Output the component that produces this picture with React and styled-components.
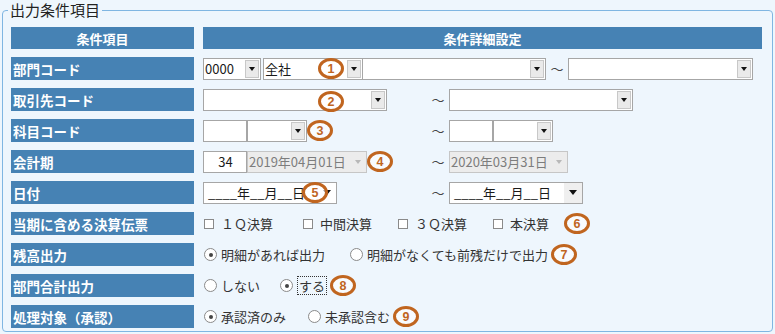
import React from 'react';
import styled, { createGlobalStyle, css } from 'styled-components';

const GlobalStyle = createGlobalStyle`
  html, body { margin: 0; padding: 0; background: #eef6fd; }
  body { font-family: "Noto Sans CJK JP", "Noto Sans", sans-serif; color: #333; }
`;

const Page = styled.div`
  width: 775px;
  height: 334px;
  box-sizing: border-box;
  padding: 0 2px 0 2px;
  overflow: hidden;
`;

const Fieldset = styled.fieldset`
  margin: 0;
  padding: 7px 10px 3px 8px;
  border: 1px solid #80b6e2;
  border-radius: 4px;
  min-width: 0;
`;

const Legend = styled.legend`
  padding: 0 2px;
  margin-left: -3px;
  font-size: 15px;
  line-height: 20px;
  color: #222;
`;

const Grid = styled.div`
  display: grid;
  grid-template-columns: 183px 559px;
  grid-template-rows: 22px repeat(9, 23px);
  column-gap: 9px;
  row-gap: 8px;
`;

const HeadCell = styled.div`
  background: #4682b4;
  color: #fff;
  font-weight: 700;
  font-size: 13px;
  display: flex;
  align-items: center;
  justify-content: center;
`;

const Label = styled.div`
  background: #4682b4;
  color: #fff;
  font-weight: 700;
  font-size: 13.5px;
  display: flex;
  align-items: center;
  padding-left: 2px;
  white-space: nowrap;
`;

const Detail = styled.div`
  position: relative;
  display: flex;
  align-items: center;
  font-size: 13px;
  color: #333;
`;

const Group = styled.div`
  display: flex;
  align-items: center;
  width: ${p => p.$w}px;
  flex: none;
`;

const Box = styled.div`
  box-sizing: border-box;
  flex: none;
  height: 22px;
  width: ${p => p.$w}px;
  margin-left: ${p => p.$ml || 0}px;
  border: 1px solid ${p => (p.$disabled ? '#c6c6c6' : '#a6a6a6')};
  background: ${p => (p.$disabled ? '#ececec' : '#fff')};
  color: ${p => (p.$disabled ? '#7d7d7d' : '#1a1a1a')};
  display: flex;
  align-items: center;
  font-size: 13px;
`;

const BoxText = styled.span`
  flex: 1;
  padding-left: 1px;
  white-space: nowrap;
  overflow: hidden;
  text-align: ${p => (p.$center ? 'center' : 'left')};
`;

const DropBtn = styled.span`
  box-sizing: border-box;
  flex: none;
  width: 14px;
  height: 18px;
  margin-right: 1px;
  border: 1px solid #c8c8c8;
  background: #eaeaea;
  display: flex;
  align-items: center;
  justify-content: center;
`;

const PlainArrow = styled.span`
  flex: none;
  width: ${p => p.$w || 16}px;
  align-self: stretch;
  background: ${p => (p.$shade ? '#efefef' : 'transparent')};
  display: flex;
  align-items: center;
  justify-content: center;
`;

const Arrow = styled.span`
  width: 0;
  height: 0;
  border-left: ${p => (p.$big ? 4 : 3.5)}px solid transparent;
  border-right: ${p => (p.$big ? 4 : 3.5)}px solid transparent;
  border-top: ${p => (p.$big ? 5 : 4)}px solid ${p => (p.$light ? '#b8b8b8' : '#111')};
`;

const Tilde = styled.span`
  flex: none;
  width: 22px;
  text-align: center;
  font-size: 13px;
  color: #444;
`;

const Badge = styled.span`
  box-sizing: border-box;
  flex: none;
  width: 26px;
  height: 21px;
  border: 3px solid #c0651f;
  border-radius: 50%;
  background: rgba(255, 255, 255, 0.6);
  color: #c0651f;
  font: bold 12.5px "Liberation Sans", Arial, sans-serif;
  display: inline-flex;
  align-items: center;
  justify-content: center;
  margin-left: ${p => p.$ml || 0}px;
  ${p =>
    p.$over &&
    css`
      position: absolute;
      left: ${p.$left}px;
      top: ${p.$top}px;
      margin: 0;
    `}
`;

const Option = styled.label`
  display: inline-flex;
  align-items: center;
  flex: none;
  margin-left: ${p => p.$ml || 0}px;
  white-space: nowrap;
  color: #333;
  font-size: 13px;
`;

const CheckBox = styled.span`
  box-sizing: border-box;
  width: 10px;
  height: 10px;
  border: 1px solid #8a8a8a;
  background: #fff;
  margin: 0 7px 0 1px;
`;

const Radio = styled.span`
  box-sizing: border-box;
  width: 13px;
  height: 13px;
  border: 1px solid #8a8a8a;
  border-radius: 50%;
  background: #fff;
  margin: 0 4px 0 1px;
  display: flex;
  align-items: center;
  justify-content: center;
  &::after {
    content: '';
    width: 4px;
    height: 4px;
    border-radius: 50%;
    background: ${p => (p.$checked ? '#444' : 'transparent')};
  }
`;

const Focus = styled.span`
  border: 1px dotted #333;
  padding: 0 1px;
  line-height: 17px;
`;

function Select({ w, ml, text, disabled }) {
  return (
    <Box $w={w} $ml={ml} $disabled={disabled}>
      <BoxText>{text}</BoxText>
      {disabled ? (
        <PlainArrow $w={17}>
          <Arrow $light />
        </PlainArrow>
      ) : (
        <DropBtn>
          <Arrow />
        </DropBtn>
      )}
    </Box>
  );
}

function Input({ w, ml, text }) {
  return (
    <Box $w={w} $ml={ml}>
      <BoxText $center>{text}</BoxText>
    </Box>
  );
}

function DateField({ w, shade }) {
  return (
    <Box $w={w}>
      <BoxText>&nbsp;____年__月__日</BoxText>
      <PlainArrow $w={18} $shade={shade}>
        <Arrow $big />
      </PlainArrow>
    </Box>
  );
}

export default function App() {
  return (
    <>
      <GlobalStyle />
      <Page>
        <Fieldset>
          <Legend>出力条件項目</Legend>
          <Grid>
            <HeadCell>条件項目</HeadCell>
            <HeadCell>条件詳細設定</HeadCell>

            <Label>部門コード</Label>
            <Detail>
              <Select w={58} text="0000" />
              <Select w={100} ml={2} text="全社" />
              <Select w={184} ml={-1} />
              <Tilde>〜</Tilde>
              <Select w={185} />
              <Badge $over $left={115} $top={1}>1</Badge>
            </Detail>

            <Label>取引先コード</Label>
            <Detail>
              <Group $w={224}>
                <Select w={184} />
              </Group>
              <Tilde>〜</Tilde>
              <Select w={184} />
              <Badge $over $left={115} $top={3}>2</Badge>
            </Detail>

            <Label>科目コード</Label>
            <Detail>
              <Group $w={224}>
                <Input w={44} />
                <Select w={60} />
                <Badge>3</Badge>
              </Group>
              <Tilde>〜</Tilde>
              <Input w={44} />
              <Select w={60} />
            </Detail>

            <Label>会計期</Label>
            <Detail>
              <Group $w={224}>
                <Input w={44} text="34" />
                <Select w={120} disabled text="2019年04月01日" />
                <Badge>4</Badge>
              </Group>
              <Tilde>〜</Tilde>
              <Select w={119} disabled text="2020年03月31日" />
            </Detail>

            <Label>日付</Label>
            <Detail>
              <Group $w={224}>
                <DateField w={134} />
              </Group>
              <Tilde>〜</Tilde>
              <DateField w={134} shade />
              <Badge $over $left={99} $top={1}>5</Badge>
            </Detail>

            <Label>当期に含める決算伝票</Label>
            <Detail>
              <Option><CheckBox />１Ｑ決算</Option>
              <Option $ml={29}><CheckBox />中間決算</Option>
              <Option $ml={25}><CheckBox />３Ｑ決算</Option>
              <Option $ml={25}><CheckBox />本決算</Option>
              <Badge $ml={15}>6</Badge>
            </Detail>

            <Label>残高出力</Label>
            <Detail>
              <Option><Radio $checked />明細があれば出力</Option>
              <Option $ml={24}><Radio />明細がなくても前残だけで出力</Option>
              <Badge $ml={3}>7</Badge>
            </Detail>

            <Label>部門合計出力</Label>
            <Detail>
              <Option><Radio />しない</Option>
              <Option $ml={19}><Radio $checked /><Focus>する</Focus></Option>
              <Badge $ml={3}>8</Badge>
            </Detail>

            <Label>処理対象（承認）</Label>
            <Detail>
              <Option><Radio $checked />承認済のみ</Option>
              <Option $ml={21}><Radio />未承認含む</Option>
              <Badge $ml={3}>9</Badge>
            </Detail>
          </Grid>
        </Fieldset>
      </Page>
    </>
  );
}
